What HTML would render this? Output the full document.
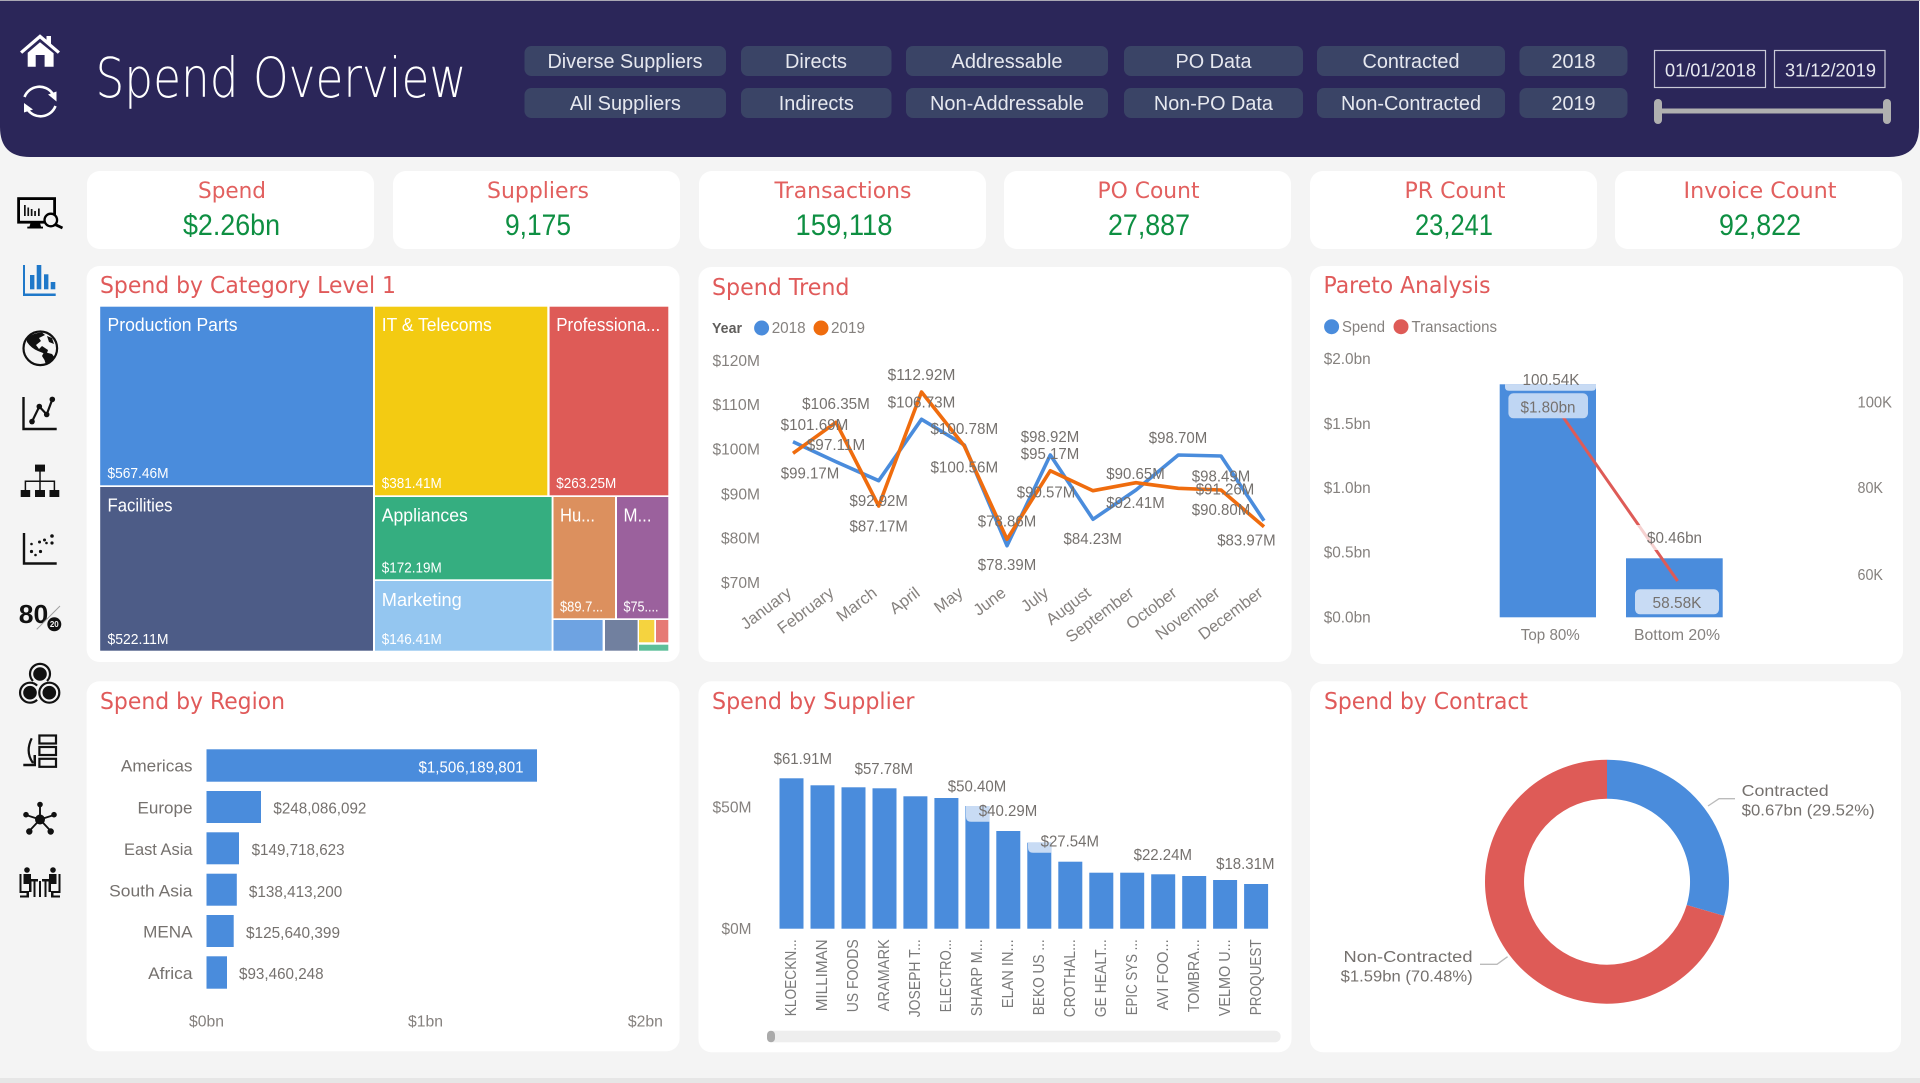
<!DOCTYPE html>
<html lang="en"><head><meta charset="utf-8"><title>Spend Overview</title>
<style>
html,body{margin:0;padding:0;background:#f4f4f4;width:1920px;height:1083px;overflow:hidden}
svg{display:block;position:absolute;left:0;top:0}
text{font-family:"Liberation Sans",sans-serif}
.t{font-family:"DejaVu Sans","Liberation Sans",sans-serif;font-size:23px;fill:#e05a5a}
.k{font-family:"DejaVu Sans","Liberation Sans",sans-serif;font-size:22px;fill:#e2605f;text-anchor:middle}
.v{font-size:30px;fill:#0e8f42;text-anchor:middle}
.b{font-size:20px;fill:#e6e8ef;text-anchor:middle}
.m{font-size:18px;fill:#fff}
.n{font-size:15px;fill:#fff}
.d{font-size:15.5px;fill:#75716e}
.dm{font-size:15.5px;fill:#75716e;text-anchor:middle}
.a{font-size:15.5px;fill:#85817e}
.ae{font-size:15.5px;fill:#85817e;text-anchor:end}
.mo{font-size:16.4px;fill:#85817e;text-anchor:end}
.am{font-size:15.5px;fill:#85817e;text-anchor:middle}
.c{font-size:16.5px;fill:#75716e;text-anchor:end}
.r{font-size:16px;fill:#7a7a7a;text-anchor:end}
</style></head><body>
<svg width="1920" height="1083" viewBox="0 0 1920 1083" xmlns="http://www.w3.org/2000/svg">
<rect width="1920" height="1083" fill="#f4f4f4"/>
<rect y="1078" width="1920" height="5" fill="#e6e6e6"/>
<!-- Header -->
<path d="M0 1H1919V127Q1919 157 1889 157H30Q0 157 0 127Z" fill="#2b2659"/>
<rect width="1920" height="1" fill="#aaa8b4"/>
<text x="95.5" y="97" font-size="55" font-weight="200" textLength="371" lengthAdjust="spacingAndGlyphs" fill="#fff" style="font-family:'DejaVu Sans','Liberation Sans',sans-serif;font-weight:200">Spend Overview</text>
<!-- home -->
<path d="M20 51.5L40 34.3L46.5 39.8V36H51V43.7L60 51.5L57.8 53.8L40 38.6L22.2 53.8Z" fill="#fff"/>
<path d="M27.7 52.8L40 42.3L53.6 53.3V66.7H44.6V55H35.7V66.7H27.7Z" fill="#fff"/>
<!-- refresh -->
<path d="M24.5 97A16 16 0 0 1 52.5 93.5M55.5 106A16 16 0 0 1 27.5 109.5" fill="none" stroke="#fff" stroke-width="2.6"/>
<path d="M48 94.5L56.5 91.5V101.5ZM24 103L33 109.5L24 112.5Z" fill="#fff"/>
<!-- buttons -->
<g fill="#3a4466">
<rect x="524.5" y="46" width="201.5" height="30" rx="7"/><rect x="524.5" y="88" width="201.5" height="30" rx="7"/>
<rect x="741" y="46" width="150.5" height="30" rx="7"/><rect x="741" y="88" width="150.5" height="30" rx="7"/>
<rect x="906" y="46" width="202" height="30" rx="7"/><rect x="906" y="88" width="202" height="30" rx="7"/>
<rect x="1124" y="46" width="179" height="30" rx="7"/><rect x="1124" y="88" width="179" height="30" rx="7"/>
<rect x="1317" y="46" width="188" height="30" rx="7"/><rect x="1317" y="88" width="188" height="30" rx="7"/>
<rect x="1519.5" y="46" width="108" height="30" rx="7"/><rect x="1519.5" y="88" width="108" height="30" rx="7"/>
</g>
<text class="b" x="625" y="68" textLength="155" lengthAdjust="spacingAndGlyphs">Diverse Suppliers</text>
<text class="b" x="816" y="68" textLength="62" lengthAdjust="spacingAndGlyphs">Directs</text>
<text class="b" x="1007" y="68" textLength="111" lengthAdjust="spacingAndGlyphs">Addressable</text>
<text class="b" x="1213.5" y="68" textLength="76" lengthAdjust="spacingAndGlyphs">PO Data</text>
<text class="b" x="1411" y="68" textLength="97" lengthAdjust="spacingAndGlyphs">Contracted</text>
<text class="b" x="1573.5" y="68" textLength="44" lengthAdjust="spacingAndGlyphs">2018</text>
<text class="b" x="625.4" y="110" textLength="111" lengthAdjust="spacingAndGlyphs">All Suppliers</text>
<text class="b" x="816.3" y="110" textLength="75" lengthAdjust="spacingAndGlyphs">Indirects</text>
<text class="b" x="1007" y="110" textLength="154" lengthAdjust="spacingAndGlyphs">Non-Addressable</text>
<text class="b" x="1213.4" y="110" textLength="119" lengthAdjust="spacingAndGlyphs">Non-PO Data</text>
<text class="b" x="1411" y="110" textLength="140" lengthAdjust="spacingAndGlyphs">Non-Contracted</text>
<text class="b" x="1573.5" y="110" textLength="44" lengthAdjust="spacingAndGlyphs">2019</text>
<!-- dates -->
<rect x="1654.5" y="50.5" width="111" height="37" fill="none" stroke="#c9c9d6" stroke-width="1.2"/>
<rect x="1774.5" y="50.5" width="110.5" height="37" fill="none" stroke="#c9c9d6" stroke-width="1.2"/>
<text x="1665" y="76.5" font-size="18" fill="#e6e8ef" textLength="91" lengthAdjust="spacingAndGlyphs">01/01/2018</text>
<text x="1785" y="76.5" font-size="18" fill="#e6e8ef" textLength="91" lengthAdjust="spacingAndGlyphs">31/12/2019</text>
<rect x="1656" y="108.5" width="233" height="5" fill="#b0b0b0"/>
<rect x="1654" y="99" width="8" height="25" rx="4" fill="#b0b0b0"/><rect x="1883" y="99" width="8" height="25" rx="4" fill="#b0b0b0"/>
<!-- KPI -->
<g fill="#fff">
<rect x="87" y="171" width="287" height="78" rx="13"/><rect x="393" y="171" width="287" height="78" rx="13"/>
<rect x="699" y="171" width="287" height="78" rx="13"/><rect x="1004" y="171" width="287" height="78" rx="13"/>
<rect x="1310" y="171" width="287" height="78" rx="13"/><rect x="1615" y="171" width="287" height="78" rx="13"/>
</g>
<text class="k" x="232" y="198" textLength="68" lengthAdjust="spacingAndGlyphs">Spend</text>
<text class="v" x="231.5" y="235" textLength="97" lengthAdjust="spacingAndGlyphs">$2.26bn</text>
<text class="k" x="538" y="198" textLength="102" lengthAdjust="spacingAndGlyphs">Suppliers</text>
<text class="v" x="538" y="235" textLength="66" lengthAdjust="spacingAndGlyphs">9,175</text>
<text class="k" x="843" y="198" textLength="137" lengthAdjust="spacingAndGlyphs">Transactions</text>
<text class="v" x="844" y="235" textLength="97" lengthAdjust="spacingAndGlyphs">159,118</text>
<text class="k" x="1148.5" y="198" textLength="102" lengthAdjust="spacingAndGlyphs">PO Count</text>
<text class="v" x="1149" y="235" textLength="82" lengthAdjust="spacingAndGlyphs">27,887</text>
<text class="k" x="1455" y="198" textLength="101" lengthAdjust="spacingAndGlyphs">PR Count</text>
<text class="v" x="1454" y="235" textLength="78" lengthAdjust="spacingAndGlyphs">23,241</text>
<text class="k" x="1760" y="198" textLength="153" lengthAdjust="spacingAndGlyphs">Invoice Count</text>
<text class="v" x="1760" y="235" textLength="82" lengthAdjust="spacingAndGlyphs">92,822</text>
<!-- Cards -->
<g fill="#fff">
<rect x="86.6" y="266" width="593" height="396" rx="13"/>
<rect x="698.5" y="267" width="593" height="395" rx="13"/>
<rect x="1310" y="266" width="593" height="398" rx="13"/>
<rect x="86.6" y="681.3" width="593" height="370" rx="13"/>
<rect x="698.5" y="681.3" width="593" height="371" rx="13"/>
<rect x="1310" y="681.3" width="591" height="371" rx="13"/>
</g>
<text class="t" x="100" y="293" textLength="296" lengthAdjust="spacingAndGlyphs">Spend by Category Level 1</text>
<text class="t" x="712" y="295" textLength="137.5" lengthAdjust="spacingAndGlyphs">Spend Trend</text>
<text class="t" x="1323.5" y="293" textLength="167" lengthAdjust="spacingAndGlyphs">Pareto Analysis</text>
<text class="t" x="100" y="709" textLength="185" lengthAdjust="spacingAndGlyphs">Spend by Region</text>
<text class="t" x="712" y="709" textLength="202.5" lengthAdjust="spacingAndGlyphs">Spend by Supplier</text>
<text class="t" x="1324" y="709" textLength="204" lengthAdjust="spacingAndGlyphs">Spend by Contract</text>
<!-- Treemap -->
<rect x="100.2" y="306.7" width="272.8" height="178.6" fill="#4a8cdc"/>
<rect x="100.2" y="487" width="272.8" height="163.7" fill="#4d5c87"/>
<rect x="375" y="306.7" width="172.3" height="188.6" fill="#f3cb12"/>
<rect x="549.6" y="306.7" width="118.7" height="188.6" fill="#de5b57"/>
<rect x="375" y="497" width="176.6" height="82.3" fill="#35ae80"/>
<rect x="375" y="581" width="176.6" height="69.7" fill="#94c6f0"/>
<rect x="553.5" y="497" width="61.5" height="121.3" fill="#dc905e"/>
<rect x="617" y="497" width="51.3" height="121.3" fill="#9b619d"/>
<rect x="553.5" y="620" width="49.1" height="30.7" fill="#6ea3e2"/>
<rect x="605" y="620" width="32.6" height="30.7" fill="#71809f"/>
<rect x="639" y="620" width="15.3" height="22.3" fill="#f5d33f"/>
<rect x="656" y="620" width="12.3" height="22.3" fill="#e67a75"/>
<rect x="639" y="644.7" width="29.3" height="6" fill="#5dbf9a"/>
<text class="m" x="107.5" y="331" textLength="130" lengthAdjust="spacingAndGlyphs">Production Parts</text>
<text class="n" x="107.5" y="478" textLength="61" lengthAdjust="spacingAndGlyphs">$567.46M</text>
<text class="m" x="107.5" y="511.7" textLength="65" lengthAdjust="spacingAndGlyphs">Facilities</text>
<text class="n" x="107.5" y="644" textLength="61" lengthAdjust="spacingAndGlyphs">$522.11M</text>
<text class="m" x="381.8" y="331" textLength="110" lengthAdjust="spacingAndGlyphs">IT &amp; Telecoms</text>
<text class="n" x="381.8" y="488" textLength="60" lengthAdjust="spacingAndGlyphs">$381.41M</text>
<text class="m" x="556.2" y="331" textLength="104" lengthAdjust="spacingAndGlyphs">Professiona...</text>
<text class="n" x="556.2" y="488" textLength="60" lengthAdjust="spacingAndGlyphs">$263.25M</text>
<text class="m" x="381.8" y="521.7" textLength="86" lengthAdjust="spacingAndGlyphs">Appliances</text>
<text class="n" x="381.8" y="572.7" textLength="60" lengthAdjust="spacingAndGlyphs">$172.19M</text>
<text class="m" x="381.8" y="606" textLength="80" lengthAdjust="spacingAndGlyphs">Marketing</text>
<text class="n" x="381.8" y="644" textLength="60" lengthAdjust="spacingAndGlyphs">$146.41M</text>
<text class="m" x="560" y="521.7" textLength="35" lengthAdjust="spacingAndGlyphs">Hu...</text>
<text class="n" x="560" y="611.7" textLength="43" lengthAdjust="spacingAndGlyphs">$89.7...</text>
<text class="m" x="623.5" y="521.7" textLength="28" lengthAdjust="spacingAndGlyphs">M...</text>
<text class="n" x="623.5" y="611.7" textLength="35" lengthAdjust="spacingAndGlyphs">$75....</text>
<!-- Spend Trend -->
<text x="712" y="333" font-size="15" font-weight="bold" fill="#605e5c" textLength="30" lengthAdjust="spacingAndGlyphs">Year</text>
<circle cx="761.6" cy="328" r="7.5" fill="#4a8cdc"/><text class="a" x="771.7" y="333" textLength="34" lengthAdjust="spacingAndGlyphs">2018</text>
<circle cx="821" cy="328" r="7.5" fill="#ef6c0e"/><text class="a" x="831" y="333" textLength="34" lengthAdjust="spacingAndGlyphs">2019</text>
<text class="ae" x="760" y="366" textLength="47.5" lengthAdjust="spacingAndGlyphs">$120M</text>
<text class="ae" x="760" y="410" textLength="47.5" lengthAdjust="spacingAndGlyphs">$110M</text>
<text class="ae" x="760" y="454.3" textLength="47.5" lengthAdjust="spacingAndGlyphs">$100M</text>
<text class="ae" x="760" y="499.3" textLength="39" lengthAdjust="spacingAndGlyphs">$90M</text>
<text class="ae" x="760" y="543.7" textLength="39" lengthAdjust="spacingAndGlyphs">$80M</text>
<text class="ae" x="760" y="588" textLength="39" lengthAdjust="spacingAndGlyphs">$70M</text>
<polyline fill="none" stroke="#4a8cdc" stroke-width="3.6" stroke-linejoin="round" points="793,441.7 836,461.7 878.7,480.7 921.5,419.3 964.3,445 1007,545.7 1050.3,455 1093,519.3 1136,490 1178.3,455 1221,456 1264,520.7"/>
<polyline fill="none" stroke="#ef6c0e" stroke-width="3.6" stroke-linejoin="round" points="793,453.3 836,422.3 878.7,506 921.5,392 964.3,446 1007,539.3 1050.3,470.7 1093,490.7 1136,482.7 1178.3,488.3 1221,490 1264,526.7"/>
<g>
<text class="dm" x="921.5" y="380" textLength="67.7" lengthAdjust="spacingAndGlyphs">$112.92M</text>
<text class="dm" x="921.5" y="407.3" textLength="67.7" lengthAdjust="spacingAndGlyphs">$106.73M</text>
<text class="dm" x="836" y="409" textLength="67.7" lengthAdjust="spacingAndGlyphs">$106.35M</text>
<text class="dm" x="814.5" y="430" textLength="67.7" lengthAdjust="spacingAndGlyphs">$101.69M</text>
<text class="dm" x="836" y="450" textLength="58.4" lengthAdjust="spacingAndGlyphs">$97.11M</text>
<text class="dm" x="810" y="478.3" textLength="58.4" lengthAdjust="spacingAndGlyphs">$99.17M</text>
<text class="dm" x="878.7" y="506" textLength="58.4" lengthAdjust="spacingAndGlyphs">$92.92M</text>
<text class="dm" x="878.7" y="531.7" textLength="58.4" lengthAdjust="spacingAndGlyphs">$87.17M</text>
<text class="dm" x="964.3" y="434" textLength="67.7" lengthAdjust="spacingAndGlyphs">$100.78M</text>
<text class="dm" x="964.3" y="472.3" textLength="67.7" lengthAdjust="spacingAndGlyphs">$100.56M</text>
<text class="dm" x="1007" y="526.7" textLength="58.4" lengthAdjust="spacingAndGlyphs">$78.86M</text>
<text class="dm" x="1007" y="570" textLength="58.4" lengthAdjust="spacingAndGlyphs">$78.39M</text>
<text class="dm" x="1050" y="442" textLength="58.4" lengthAdjust="spacingAndGlyphs">$98.92M</text>
<text class="dm" x="1050" y="459" textLength="58.4" lengthAdjust="spacingAndGlyphs">$95.17M</text>
<text class="dm" x="1046" y="497.7" textLength="58.4" lengthAdjust="spacingAndGlyphs">$90.57M</text>
<text class="dm" x="1092.7" y="544" textLength="58.4" lengthAdjust="spacingAndGlyphs">$84.23M</text>
<text class="dm" x="1135.5" y="479" textLength="58.4" lengthAdjust="spacingAndGlyphs">$90.65M</text>
<text class="dm" x="1135.5" y="508" textLength="58.4" lengthAdjust="spacingAndGlyphs">$92.41M</text>
<text class="dm" x="1178" y="443" textLength="58.4" lengthAdjust="spacingAndGlyphs">$98.70M</text>
<text class="dm" x="1221" y="481.7" textLength="58.4" lengthAdjust="spacingAndGlyphs">$98.49M</text>
<text class="dm" x="1225" y="494.3" textLength="58.4" lengthAdjust="spacingAndGlyphs">$91.26M</text>
<text class="dm" x="1221" y="515" textLength="58.4" lengthAdjust="spacingAndGlyphs">$90.80M</text>
<text class="dm" x="1246.4" y="545.3" textLength="58.4" lengthAdjust="spacingAndGlyphs">$83.97M</text>
</g>
<g>
<text class="mo" transform="translate(792.5 595) rotate(-37)">January</text>
<text class="mo" transform="translate(835 595) rotate(-37)">February</text>
<text class="mo" transform="translate(878 595) rotate(-37)">March</text>
<text class="mo" transform="translate(921 595) rotate(-37)">April</text>
<text class="mo" transform="translate(964 595) rotate(-37)">May</text>
<text class="mo" transform="translate(1007 595) rotate(-37)">June</text>
<text class="mo" transform="translate(1049.5 595) rotate(-37)">July</text>
<text class="mo" transform="translate(1092 595) rotate(-37)">August</text>
<text class="mo" transform="translate(1135 595) rotate(-37)">September</text>
<text class="mo" transform="translate(1178 595) rotate(-37)">October</text>
<text class="mo" transform="translate(1221 595) rotate(-37)">November</text>
<text class="mo" transform="translate(1264 595) rotate(-37)">December</text>
</g>
<!-- Pareto -->
<circle cx="1331.6" cy="326.7" r="7.5" fill="#4a8cdc"/><text class="a" x="1342" y="332" textLength="43" lengthAdjust="spacingAndGlyphs">Spend</text>
<circle cx="1401" cy="326.7" r="7.5" fill="#de5b57"/><text class="a" x="1411.5" y="332" textLength="85.5" lengthAdjust="spacingAndGlyphs">Transactions</text>
<text class="a" x="1323.7" y="364" textLength="47" lengthAdjust="spacingAndGlyphs">$2.0bn</text>
<text class="a" x="1323.7" y="429" textLength="47" lengthAdjust="spacingAndGlyphs">$1.5bn</text>
<text class="a" x="1323.7" y="493" textLength="47" lengthAdjust="spacingAndGlyphs">$1.0bn</text>
<text class="a" x="1323.7" y="557.7" textLength="47" lengthAdjust="spacingAndGlyphs">$0.5bn</text>
<text class="a" x="1323.7" y="622.3" textLength="47" lengthAdjust="spacingAndGlyphs">$0.0bn</text>
<text class="a" x="1857.5" y="407.7" textLength="34.5" lengthAdjust="spacingAndGlyphs">100K</text>
<text class="a" x="1857.5" y="493" textLength="25.5" lengthAdjust="spacingAndGlyphs">80K</text>
<text class="a" x="1857.5" y="580" textLength="25.5" lengthAdjust="spacingAndGlyphs">60K</text>
<rect x="1499.7" y="384.3" width="96.3" height="233" fill="#4a8cdc"/>
<rect x="1626" y="558.3" width="96.7" height="59" fill="#4a8cdc"/>
<path d="M1505 384.3H1596V387Q1596 390.7 1592 390.7H1509Q1505 390.7 1505 387Z" fill="#c8dbf4"/>
<line x1="1550" y1="398.3" x2="1677.6" y2="581" stroke="#de5b57" stroke-width="3"/>
<rect x="1508.4" y="393.3" width="79.6" height="25" rx="5" fill="#c8dbf4" fill-opacity=".93"/>
<rect x="1635" y="589.3" width="84" height="25" rx="5" fill="#c8dbf4"/>
<rect x="1630" y="525" width="90" height="25" fill="#fff" fill-opacity=".72"/>
<text class="dm" x="1551" y="385" textLength="57" lengthAdjust="spacingAndGlyphs">100.54K</text>
<text class="dm" x="1548" y="412.7" textLength="55" lengthAdjust="spacingAndGlyphs">$1.80bn</text>
<text class="dm" x="1674.5" y="543" textLength="55" lengthAdjust="spacingAndGlyphs">$0.46bn</text>
<text class="dm" x="1677" y="608" textLength="49" lengthAdjust="spacingAndGlyphs">58.58K</text>
<text class="am" x="1550.3" y="640" textLength="59" lengthAdjust="spacingAndGlyphs">Top 80%</text>
<text class="am" x="1677" y="640" textLength="86" lengthAdjust="spacingAndGlyphs">Bottom 20%</text>
<!-- Region -->
<g fill="#4a8cdc">
<rect x="206.5" y="749.3" width="330.5" height="32.4"/>
<rect x="206.5" y="791" width="54.5" height="32"/>
<rect x="206.5" y="832.3" width="32.5" height="32"/>
<rect x="206.5" y="873.7" width="30.3" height="32"/>
<rect x="206.5" y="915" width="27.2" height="32"/>
<rect x="206.5" y="956.3" width="20.5" height="32.4"/>
</g>
<text class="c" x="192.5" y="771.7" textLength="71.6" lengthAdjust="spacingAndGlyphs">Americas</text>
<text class="c" x="192.5" y="813.3" textLength="55" lengthAdjust="spacingAndGlyphs">Europe</text>
<text class="c" x="192.5" y="855" textLength="68.5" lengthAdjust="spacingAndGlyphs">East Asia</text>
<text class="c" x="192.5" y="896.7" textLength="83.3" lengthAdjust="spacingAndGlyphs">South Asia</text>
<text class="c" x="192.5" y="937.3" textLength="49.4" lengthAdjust="spacingAndGlyphs">MENA</text>
<text class="c" x="192.5" y="979" textLength="44.4" lengthAdjust="spacingAndGlyphs">Africa</text>
<text class="d" x="418.5" y="772.3" style="fill:#fff" textLength="105" lengthAdjust="spacingAndGlyphs">$1,506,189,801</text>
<text class="d" x="273.4" y="813.3" textLength="93" lengthAdjust="spacingAndGlyphs">$248,086,092</text>
<text class="d" x="251.6" y="855" textLength="93" lengthAdjust="spacingAndGlyphs">$149,718,623</text>
<text class="d" x="248.9" y="897" textLength="93.4" lengthAdjust="spacingAndGlyphs">$138,413,200</text>
<text class="d" x="246" y="938" textLength="94" lengthAdjust="spacingAndGlyphs">$125,640,399</text>
<text class="d" x="239" y="979" textLength="84.6" lengthAdjust="spacingAndGlyphs">$93,460,248</text>
<text class="am" x="206.5" y="1026.7" textLength="35" lengthAdjust="spacingAndGlyphs">$0bn</text>
<text class="am" x="425.5" y="1026.7" textLength="35" lengthAdjust="spacingAndGlyphs">$1bn</text>
<text class="am" x="645.4" y="1026.7" textLength="35" lengthAdjust="spacingAndGlyphs">$2bn</text>
<!-- Supplier -->
<text class="ae" x="751.5" y="812.7" textLength="39" lengthAdjust="spacingAndGlyphs">$50M</text>
<text class="ae" x="751.5" y="934" textLength="30" lengthAdjust="spacingAndGlyphs">$0M</text>
<g fill="#4a8cdc">
<rect x="779.5" y="778.3" width="24" height="150.4"/>
<rect x="810.5" y="785.3" width="24" height="143.4"/>
<rect x="841.5" y="787.3" width="24" height="141.4"/>
<rect x="872.5" y="788.3" width="24" height="140.4"/>
<rect x="903.4" y="796.3" width="24" height="132.4"/>
<rect x="934.4" y="798" width="24" height="130.7"/>
<rect x="965.4" y="806" width="24" height="122.7"/>
<rect x="996.3" y="831" width="24" height="97.7"/>
<rect x="1027.3" y="842.7" width="24" height="86"/>
<rect x="1058.3" y="861.7" width="24" height="67"/>
<rect x="1089.3" y="872.7" width="24" height="56"/>
<rect x="1120.2" y="872.7" width="24" height="56"/>
<rect x="1151.2" y="874.3" width="24" height="54.4"/>
<rect x="1182.2" y="876" width="24" height="52.7"/>
<rect x="1213.1" y="880" width="24" height="48.7"/>
<rect x="1244.1" y="884" width="24" height="44.7"/>
</g>
<path d="M966 806H989.4V821.7H971Q966 821.7 966 816.7Z" fill="#c8dbf4"/>
<path d="M1028 842.7H1051.3V852.7H1033Q1028 852.7 1028 847.7Z" fill="#c8dbf4"/>
<text class="dm" x="802.8" y="764" textLength="58.4" lengthAdjust="spacingAndGlyphs">$61.91M</text>
<text class="dm" x="883.8" y="774" textLength="58.4" lengthAdjust="spacingAndGlyphs">$57.78M</text>
<text class="dm" x="977" y="791.7" textLength="58.4" lengthAdjust="spacingAndGlyphs">$50.40M</text>
<text class="dm" x="1008" y="816" textLength="58.4" lengthAdjust="spacingAndGlyphs">$40.29M</text>
<text class="dm" x="1069.8" y="846.7" textLength="58.4" lengthAdjust="spacingAndGlyphs">$27.54M</text>
<text class="dm" x="1162.8" y="860" textLength="58.4" lengthAdjust="spacingAndGlyphs">$22.24M</text>
<text class="dm" x="1245.3" y="869" textLength="58.4" lengthAdjust="spacingAndGlyphs">$18.31M</text>
<g>
<text class="r" transform="translate(796 939.3) rotate(-90)" textLength="77" lengthAdjust="spacingAndGlyphs">KLOECKN...</text>
<text class="r" transform="translate(827 939.3) rotate(-90)" textLength="72" lengthAdjust="spacingAndGlyphs">MILLIMAN</text>
<text class="r" transform="translate(858 939.3) rotate(-90)" textLength="73" lengthAdjust="spacingAndGlyphs">US FOODS</text>
<text class="r" transform="translate(889 939.3) rotate(-90)" textLength="72" lengthAdjust="spacingAndGlyphs">ARAMARK</text>
<text class="r" transform="translate(920 939.3) rotate(-90)" textLength="78" lengthAdjust="spacingAndGlyphs">JOSEPH T...</text>
<text class="r" transform="translate(951 939.3) rotate(-90)" textLength="73" lengthAdjust="spacingAndGlyphs">ELECTRO...</text>
<text class="r" transform="translate(982 939.3) rotate(-90)" textLength="77" lengthAdjust="spacingAndGlyphs">SHARP M...</text>
<text class="r" transform="translate(1013 939.3) rotate(-90)" textLength="69" lengthAdjust="spacingAndGlyphs">ELAN IN...</text>
<text class="r" transform="translate(1044 939.3) rotate(-90)" textLength="76" lengthAdjust="spacingAndGlyphs">BEKO US ...</text>
<text class="r" transform="translate(1075 939.3) rotate(-90)" textLength="78" lengthAdjust="spacingAndGlyphs">CROTHAL...</text>
<text class="r" transform="translate(1106 939.3) rotate(-90)" textLength="78" lengthAdjust="spacingAndGlyphs">GE HEALT...</text>
<text class="r" transform="translate(1137 939.3) rotate(-90)" textLength="76" lengthAdjust="spacingAndGlyphs">EPIC SYS ...</text>
<text class="r" transform="translate(1168 939.3) rotate(-90)" textLength="71" lengthAdjust="spacingAndGlyphs">AVI FOO...</text>
<text class="r" transform="translate(1199 939.3) rotate(-90)" textLength="73" lengthAdjust="spacingAndGlyphs">TOMBRA...</text>
<text class="r" transform="translate(1230 939.3) rotate(-90)" textLength="77" lengthAdjust="spacingAndGlyphs">VELMO U...</text>
<text class="r" transform="translate(1261 939.3) rotate(-90)" textLength="76" lengthAdjust="spacingAndGlyphs">PROQUEST</text>
</g>
<rect x="767" y="1030.7" width="513.7" height="11.6" rx="5.8" fill="#eeeeee"/>
<rect x="767" y="1030.7" width="8" height="11.6" rx="4" fill="#aaaaaa"/>
<!-- Contract -->
<path d="M1607 759.7A122 122 0 0 1 1724.1 915.9L1686.7 905A83 83 0 0 0 1607 798.7Z" fill="#4a8cdc"/>
<path d="M1607 759.7A122 122 0 1 0 1724.1 915.9L1686.7 905A83 83 0 1 1 1607 798.7Z" fill="#de5b57"/>
<polyline points="1708,806 1719,798.7 1735,798.7" fill="none" stroke="#bbbbbb" stroke-width="1.3"/>
<polyline points="1507.6,956.7 1497,964.3 1480,964.3" fill="none" stroke="#bbbbbb" stroke-width="1.3"/>
<text class="d" x="1741.7" y="796" textLength="87" lengthAdjust="spacingAndGlyphs">Contracted</text>
<text class="d" x="1741.7" y="815.7" textLength="133" lengthAdjust="spacingAndGlyphs">$0.67bn (29.52%)</text>
<text class="d" x="1343.5" y="962" textLength="129" lengthAdjust="spacingAndGlyphs">Non-Contracted</text>
<text class="d" x="1340.7" y="981.7" textLength="132" lengthAdjust="spacingAndGlyphs">$1.59bn (70.48%)</text>
<!-- Sidebar icons -->
<g fill="#111">
<!-- monitor -->
<rect x="18.6" y="198.6" width="36" height="23.6" fill="none" stroke="#000" stroke-width="2.8"/>
<path d="M30.5 223H40L41 226.6H43V228.5H27.3V226.6H29.5Z" fill="#000"/>
<rect x="24" y="205" width="1.7" height="11"/><rect x="27.4" y="207.5" width="1.7" height="8.5"/><rect x="30.8" y="209" width="1.7" height="7"/><rect x="34.2" y="211" width="1.7" height="5"/><rect x="38" y="208.5" width="1.7" height="7.5"/>
<circle cx="50.8" cy="220" r="6.3" fill="#f4f4f4" stroke="#000" stroke-width="2.3"/>
<path d="M55.5 224.7L62.5 228" stroke="#000" stroke-width="2.8"/>
<!-- bars -->
<g fill="#1f78c9">
<path d="M23 265H25V293.5H55.7V296H23Z"/>
<rect x="30" y="275" width="4.4" height="14.3"/><rect x="36.7" y="265" width="4.6" height="24.3"/><rect x="44" y="274.3" width="4.4" height="15"/><rect x="50.7" y="282" width="4.6" height="7.3"/>
</g>
<!-- globe -->
<circle cx="40.3" cy="348.3" r="16.8" fill="#f4f4f4" stroke="#111" stroke-width="2.2"/>
<path d="M27 338Q33 333 42 332.5L45 335L39 338L41 341L36 345L39 349L42 346L48 350L47 353L43 353L38 351Q31 348 27 342Z"/>
<path d="M44 352L52 354L55 358Q51 363 46 365L44.5 360L42 356Z"/>
<path d="M47 336L52 338L54 344L49 342Z"/>
<!-- line chart -->
<path d="M23.5 397V429H56.7" fill="none" stroke="#111" stroke-width="2.4"/>
<polyline points="32,421.6 39.3,406.5 46.7,414.5 52.3,399.4" fill="none" stroke="#111" stroke-width="2.2"/>
<circle cx="32" cy="421.6" r="2.8"/><circle cx="39.3" cy="406.5" r="2.8"/><circle cx="46.7" cy="414.5" r="2.8"/><circle cx="52.3" cy="399.4" r="2.8"/>
<!-- hierarchy -->
<rect x="35" y="464.6" width="10" height="7"/><rect x="20.7" y="490" width="9.5" height="7"/><rect x="35" y="490" width="10" height="7"/><rect x="49.5" y="490" width="9.8" height="7"/>
<path d="M40 471V490M25.4 490V481.2H54.4V490" fill="none" stroke="#111" stroke-width="1.5"/>
<!-- scatter -->
<path d="M24 533V563.5H56.7" fill="none" stroke="#111" stroke-width="2.4"/>
<circle cx="31.5" cy="551.5" r="1.6"/><circle cx="40.5" cy="551.5" r="1.6"/><circle cx="31.5" cy="544" r="1.3"/><circle cx="39.5" cy="542" r="1.5"/><circle cx="44.5" cy="540" r="1.5"/><circle cx="52" cy="536" r="1.8"/><circle cx="52" cy="543" r="1.6"/><circle cx="46.5" cy="543" r="1.3"/><circle cx="35.5" cy="555" r="1.3"/>
<!-- 80/20 -->
<text x="18.8" y="623" font-size="25.5" font-weight="bold" fill="#111" textLength="29.5" lengthAdjust="spacingAndGlyphs">80</text>
<line x1="36.7" y1="629.3" x2="60" y2="606" stroke="#a0a0a0" stroke-width="1"/>
<circle cx="54.3" cy="624.3" r="7"/>
<text x="54.3" y="627" font-size="8" font-weight="bold" fill="#f4f4f4" text-anchor="middle">20</text>
<!-- circles -->
<g fill="none" stroke="#111" stroke-width="2.2">
<path d="M33 681A10 10 0 1 1 47 681"/>
<path d="M37.1 699.8A10 10 0 1 1 37.1 685.6"/>
<circle cx="49.3" cy="692.7" r="10"/>
</g>
<circle cx="40" cy="674" r="6.8"/><circle cx="30" cy="692.7" r="6.8"/><circle cx="49.3" cy="692.7" r="6.8"/>
<!-- list -->
<g fill="none" stroke="#111" stroke-width="2.2">
<rect x="39.4" y="735.5" width="16.6" height="8"/><rect x="39.4" y="747" width="16.6" height="8"/><rect x="39.4" y="758.8" width="16.6" height="8"/>
<path d="M31.7 738.3Q25 752 33 763"/>
</g>
<path d="M23.3 763.7H33.5V755H36V766.2H23.3Z"/>
<!-- network -->
<g stroke="#111" stroke-width="1.9"><path d="M40 819.5L40 805M40 819.5L26 815M40 819.5L54 815M40 819.5L29.3 831M40 819.5L50.7 831"/></g>
<circle cx="40" cy="819.5" r="5"/><circle cx="40" cy="804.5" r="2.8"/><circle cx="26" cy="814.7" r="2.8"/><circle cx="54" cy="814.7" r="2.8"/><circle cx="29.3" cy="831.5" r="3.2"/><circle cx="50.7" cy="831.5" r="3.2"/>
<!-- people -->
<circle cx="27" cy="870" r="2.8"/><circle cx="53" cy="870" r="2.8"/>
<path d="M19.5 874H21.5V891H29V897.5H20V895.5H26.5V893H19.5Z"/>
<path d="M60.5 874H58.5V891H51V897.5H60V895.5H53.5V893H60.5Z"/>
<path d="M23.5 874H31V879H38V881.5H31.5V892H29V884H23.5Z"/>
<path d="M56.5 874H49V879H42V881.5H48.5V892H51V884H56.5Z"/>
<rect x="33.5" y="881" width="2" height="16"/><rect x="39" y="881" width="2" height="16"/><rect x="44.5" y="881" width="2" height="16"/>
</g>
</svg>
</body></html>
